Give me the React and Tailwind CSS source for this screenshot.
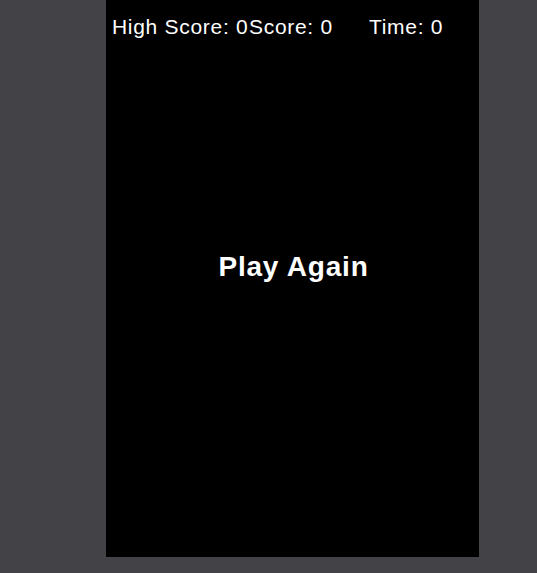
export default function App() {
  return (
    <div className="w-[537px] h-[573px] bg-[#434247] overflow-hidden" style={{ fontFamily: '"Liberation Sans", Arial, sans-serif' }}>
      <div className="ml-[106px] w-[373px] h-[557px] bg-black flex flex-col text-white">
        <div className="grid grid-cols-[137px_120px_auto] pl-[6px] pt-[15px] text-[21px] leading-[24px] tracking-[0.7px] whitespace-nowrap">
          <div>High Score: 0</div>
          <div>Score: 0</div>
          <div>Time: 0</div>
        </div>
        <div className="mt-[212px] text-center text-[28px] leading-[32px] font-bold tracking-[0.8px] pl-[2px]">Play Again</div>
      </div>
    </div>
  );
}
